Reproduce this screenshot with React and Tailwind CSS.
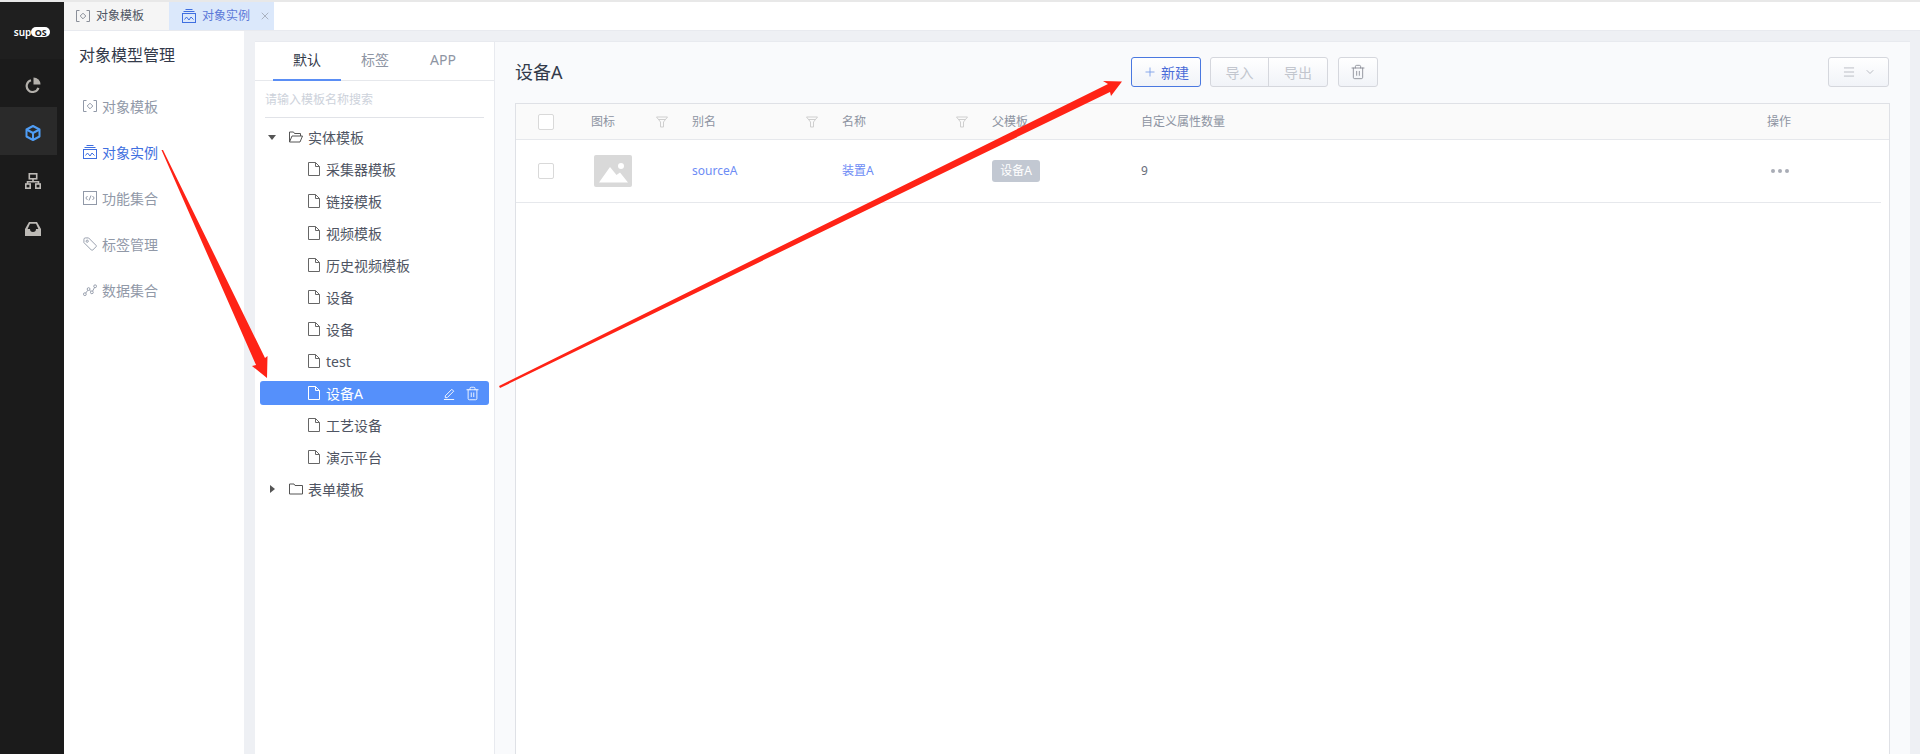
import { X, Plus, Trash2, ChevronDown, Menu } from "lucide-react";

const FONT = "font-['Noto_Sans','Noto_Sans_CJK_SC',sans-serif]";

const TemplateIcon = ({ className }) => (
  <svg viewBox="0 0 14 14" fill="none" stroke="currentColor" strokeWidth="1" className={className}>
    <path d="M3.5 1.5H.5v11h3M10.5 1.5h3v11h-3" />
    <path d="M7 4.2L9.8 7 7 9.8 4.2 7z" />
  </svg>
);

const InstanceIcon = ({ className }) => (
  <svg viewBox="0 0 14 14" fill="none" stroke="currentColor" strokeWidth="1" className={className}>
    <path d="M3.5.5h7M1.5 2.5h11" />
    <rect x=".5" y="4.5" width="13" height="9" />
    <path d="M2.5 10.5l2-2.5 2.5 3 2-3 2.5 2.5" />
  </svg>
);

const CodeIcon = ({ className }) => (
  <svg viewBox="0 0 14 14" fill="none" stroke="currentColor" strokeWidth="1" className={className}>
    <rect x=".5" y=".5" width="13" height="13" />
    <path d="M4.5 5L2.8 7l1.7 2M9.5 5l1.7 2-1.7 2M8 4.5L6 9.5" />
  </svg>
);

const TagIcon = ({ className }) => (
  <svg viewBox="0 0 15 15" fill="none" stroke="currentColor" strokeWidth="1" className={className}>
    <path d="M1 2.5A1.5 1.5 0 0 1 2.5 1H6l8 8a1 1 0 0 1 0 1.4L10.4 14a1 1 0 0 1-1.4 0L1 6z" strokeLinejoin="round" />
    <circle cx="4.5" cy="4.5" r="1.2" />
  </svg>
);

const DataIcon = ({ className }) => (
  <svg viewBox="0 0 15 15" fill="none" stroke="currentColor" strokeWidth="1" className={className}>
    <circle cx="2" cy="12" r="1.5" />
    <circle cx="6" cy="6.5" r="1.5" />
    <circle cx="9.5" cy="10" r="1.5" />
    <circle cx="13" cy="3.5" r="1.5" />
    <path d="M2.9 10.8l2.2-3M7 7.6l1.4 1.3M10.3 8.7l2-3.8" />
  </svg>
);

const FileIcon = ({ className }) => (
  <svg viewBox="0 0 12 14" fill="none" stroke="currentColor" strokeWidth="1" className={className}>
    <path d="M.5.5h7l4 4v9H.5z" />
    <path d="M7.5.5v4h4" />
  </svg>
);

const FolderOpen = ({ className }) => (
  <svg viewBox="0 0 14 12" fill="none" stroke="currentColor" strokeWidth="1" className={className}>
    <path d="M.5 11V1h4l1 1.5h6V5" />
    <path d="M.5 11l2.5-6h10.5L11 11z" />
  </svg>
);

const FolderClosed = ({ className }) => (
  <svg viewBox="0 0 14 12" fill="none" stroke="currentColor" strokeWidth="1" className={className}>
    <path d="M.5 11V1h4.5l1 1.5h7.5V11z" />
  </svg>
);

const FilterIcon = () => (
  <svg viewBox="0 0 12 12" fill="none" stroke="#cfcfcf" strokeWidth="1" className="h-3 w-3">
    <path d="M.5 1h11L7.5 6v5h-3V6z" />
    <path d="M2.5 3.5h7" />
  </svg>
);

const Logo = () => (
  <div className="flex items-center text-white">
    <span className="text-[10px] font-semibold leading-none">sup</span>
    <span className="flex h-[10px] w-[19px] items-center justify-center rounded-full bg-white text-[9px] font-bold leading-none text-[#1c1c1c]">OS</span>
  </div>
);

const Sidebar = () => (
  <div className="flex w-16 shrink-0 flex-col bg-[#1b1b1b]">
    <div className="flex h-[57px] items-center justify-center bg-[#1f1f1f] pt-[3px]">
      <Logo />
    </div>
    <div className="flex h-12 w-[57px] items-center justify-center pl-[8px] pt-[3px]">
      <svg viewBox="0 0 16 16" className="h-4 w-4" fill="none" stroke="#b3b0ab" strokeWidth="2.2">
        <path d="M6 3.2a6 6 0 1 0 7.4 7.6" />
        <path d="M8.5 .5v7h7a7 7 0 0 0-7-7z" fill="#b3b0ab" stroke="none" />
      </svg>
    </div>
    <div className="flex h-12 w-[57px] items-center justify-center bg-[#2a2a2a] pl-[8px] pt-[3px]">
      <svg viewBox="0 0 16 16" className="h-4 w-4" fill="none" stroke="#4f9df5" strokeWidth="2" strokeLinejoin="round">
        <path d="M8 1l6.5 3.5v7L8 15l-6.5-3.5v-7z" />
        <path d="M1.5 4.5L8 8l6.5-3.5M8 8v7" />
      </svg>
    </div>
    <div className="flex h-12 w-[57px] items-center justify-center pl-[8px] pt-[3px]">
      <svg viewBox="0 0 16 16" className="h-4 w-4" fill="none" stroke="#bdbab6" strokeWidth="1.6">
        <rect x="4.3" y=".8" width="7.4" height="5" />
        <path d="M8 5.8v3M2.5 11V8.8h11V11" />
        <rect x=".8" y="11" width="4.4" height="4.2" />
        <rect x="10.8" y="11" width="4.4" height="4.2" />
      </svg>
    </div>
    <div className="flex h-12 w-[57px] items-center justify-center pl-[8px] pt-[3px]">
      <svg viewBox="0 0 16 16" className="h-4 w-4" fill="#bdbab6" fillRule="evenodd">
        <path d="M4 1h8l4 7v7H0V8zM5 2.8h6L13.4 8H11a3 3 0 0 1-6 0H2.6z" />
      </svg>
    </div>
  </div>
);

const navItems = [
  { label: "对象模板", Icon: TemplateIcon },
  { label: "对象实例", Icon: InstanceIcon, active: true },
  { label: "功能集合", Icon: CodeIcon },
  { label: "标签管理", Icon: TagIcon },
  { label: "数据集合", Icon: DataIcon },
];

const LeftNav = () => (
  <div className="w-[180px] shrink-0 bg-white">
    <div className="pl-[15px] pt-[12px] text-[16px] leading-[24px] text-[#333a4a]">对象模型管理</div>
    <div className="mt-[21px] flex flex-col gap-[10px] pl-[18px]">
      {navItems.map(({ label, Icon, active }) => (
        <div
          key={label}
          className={`flex h-9 items-center gap-[5px] text-[14px] ${active ? "text-[#3f6fe0]" : "text-[#9199a8]"}`}
        >
          <span className="flex w-[15px] justify-center">
            <Icon className="h-[14px] w-[14px]" />
          </span>
          <span>{label}</span>
        </div>
      ))}
    </div>
  </div>
);

const treeLeaves = ["采集器模板", "链接模板", "视频模板", "历史视频模板", "设备", "设备", "test", "设备A", "工艺设备", "演示平台"];

const TreePanel = () => (
  <div className="flex w-[240px] shrink-0 flex-col border-r border-[#e8eaef] bg-white">
    <div className="flex h-[39px] shrink-0 border-b border-[#e6e8ec] pl-[18px] text-[14px]">
      <div className="relative flex w-[68px] items-center justify-center pb-[3px] text-[#333a4a]">
        默认
        <div className="absolute bottom-[-1px] left-0 h-[2px] w-full bg-[#5a8ef5]" />
      </div>
      <div className="flex w-[68px] items-center justify-center pb-[3px] text-[#8e95a3]">标签</div>
      <div className="flex w-[68px] items-center justify-center pb-[3px] text-[#8e95a3]">APP</div>
    </div>
    <div className="mx-[10px] flex h-[37px] shrink-0 items-center border-b border-[#e1e3e8] pt-[2px] text-[12px] text-[#cdd2db]">
      请输入模板名称搜索
    </div>
    <div className="mt-[3px] flex flex-col pl-[5px] pr-[5px] text-[14px] text-[#4f5563]">
      <div className="flex h-8 items-center pl-[8px]">
        <span className="h-0 w-0 border-x-[4px] border-t-[5px] border-x-transparent border-t-[#555]" />
        <FolderOpen className="ml-[13px] h-[12px] w-[14px] text-[#555]" />
        <span className="ml-[5px]">实体模板</span>
      </div>
      {treeLeaves.map((name, i) =>
        name === "设备A" ? (
          <div key={i} className="my-[4px] flex h-6 items-center rounded-[3px] bg-[#5590fb] pl-[48px] pr-[9px] text-white">
            <FileIcon className="h-[14px] w-[12px]" />
            <span className="ml-[6px]">{name}</span>
            <svg viewBox="0 0 14 14" fill="none" stroke="currentColor" strokeWidth="1" className="ml-auto h-[13px] w-[13px]">
              <path d="M2.5 9.5l7-7 2 2-7 7H2.5zM1 13.5h11" />
            </svg>
            <Trash2 className="ml-[9px] h-[15px] w-[15px]" strokeWidth={1.4} />
          </div>
        ) : (
          <div key={i} className="flex h-8 items-center pl-[48px]">
            <FileIcon className="h-[14px] w-[12px] text-[#666]" />
            <span className="ml-[6px]">{name}</span>
          </div>
        )
      )}
      <div className="flex h-8 items-center pl-[8px]">
        <span className="ml-[2px] h-0 w-0 border-y-[4px] border-l-[5px] border-y-transparent border-l-[#555]" />
        <FolderClosed className="ml-[14px] h-[12px] w-[14px] text-[#555]" />
        <span className="ml-[5px]">表单模板</span>
      </div>
    </div>
  </div>
);

const Toolbar = () => (
  <div className="flex h-[61px] shrink-0 items-center pb-[1px] pl-[20px] pr-[21px]">
    <div className="w-[616px] text-[18px] text-[#333a4a]">设备A</div>
    <button className="flex h-[30px] w-[70px] items-center justify-center gap-[4px] rounded-[3px] border border-[#4a78e0] bg-gradient-to-b from-white to-[#f1f3f8] text-[14px] text-[#4a6bd8]">
      <Plus className="h-[14px] w-[14px] text-[#7a9de8]" strokeWidth={1.5} />
      新建
    </button>
    <div className="ml-[9px] flex h-[30px] rounded-[3px] border border-[#d5d7dd] bg-gradient-to-b from-white to-[#f1f3f8] text-[14px] text-[#c2c6ce]">
      <div className="flex w-[58px] items-center justify-center border-r border-[#d5d7dd]">导入</div>
      <div className="flex w-[58px] items-center justify-center">导出</div>
    </div>
    <button className="ml-[10px] flex h-[30px] w-[40px] items-center justify-center rounded-[3px] border border-[#d5d7dd] bg-gradient-to-b from-white to-[#f1f3f8] text-[#7d828c]">
      <Trash2 className="h-[16px] w-[16px]" strokeWidth={1.2} />
    </button>
    <button className="ml-auto flex h-[30px] w-[61px] items-center justify-center gap-[8px] rounded-[3px] border border-[#d5d7dd] bg-gradient-to-b from-white to-[#f1f3f8] text-[#a5a8b0]">
      <Menu className="h-[14px] w-[14px]" strokeWidth={1.2} />
      <ChevronDown className="h-[12px] w-[12px]" strokeWidth={1.5} />
    </button>
  </div>
);

const Checkbox = () => <span className="block h-4 w-4 rounded-[2px] border border-[#d9d9d9] bg-white" />;

const columns = [
  { label: "图标", w: "w-[101px]", filter: true },
  { label: "别名", w: "w-[150px]", filter: true },
  { label: "名称", w: "w-[150px]", filter: true },
  { label: "父模板", w: "w-[149px]" },
  { label: "自定义属性数量", w: "w-[626px]" },
  { label: "操作", w: "" },
];

const Table = () => (
  <div className="ml-[20px] mr-[20px] flex flex-1 flex-col border-x border-t border-[#dfe1e6] bg-white text-[12px]">
    <div className="flex h-[36px] shrink-0 items-center border-b border-[#e6e8ec] bg-[#fafafa] pl-[22px] text-[#8d94a2]">
      <div className="w-[53px]"><Checkbox /></div>
      {columns.map((c) => (
        <div key={c.label} className={`relative flex items-center ${c.w}`}>
          {c.label}
          {c.filter && <span className="absolute right-[24px] flex"><FilterIcon /></span>}
        </div>
      ))}
    </div>
    <div className="mr-[8px] flex h-[63px] shrink-0 items-center border-b border-[#e6e8ec] pl-[22px] text-[#666c79]">
      <div className="w-[56px]"><Checkbox /></div>
      <div className="w-[98px]">
        <div className="h-[32px] w-[38px] overflow-hidden rounded-[2px] bg-[#d9d9d9]">
          <svg viewBox="0 0 38 32" className="h-[32px] w-[38px]" fill="#fff">
            <circle cx="27" cy="11" r="3" />
            <path d="M5 27.5L16 12l6.5 8 3.5-2.5 8 10z" />
          </svg>
        </div>
      </div>
      <div className="w-[150px] text-[#6d8cf5]">sourceA</div>
      <div className="w-[150px] text-[#6d8cf5]">装置A</div>
      <div className="w-[149px]">
        <span className="flex h-[22px] w-[48px] items-center justify-center rounded-[3px] bg-[#c2c8d2] text-[12px] text-white">设备A</span>
      </div>
      <div className="w-[630px]">9</div>
      <div className="flex gap-[3px]">
        <span className="h-[4px] w-[4px] rounded-full bg-[#a9adb6]" />
        <span className="h-[4px] w-[4px] rounded-full bg-[#a9adb6]" />
        <span className="h-[4px] w-[4px] rounded-full bg-[#a9adb6]" />
      </div>
    </div>
  </div>
);

const Arrows = () => (
  <svg viewBox="0 0 1920 754" className="pointer-events-none absolute left-0 top-0 h-[754px] w-[1920px]" fill="#ff2316">
    <path d="M161.5 150 L163 150 L265 358 L267.5 356 L267 378 L252 366 L256 365 Z" />
    <path d="M499 386 L1108 84 L1103 81 L1122 81.5 L1111 96 L1110 92 L500 388 Z" />
  </svg>
);

export default function App() {
  return (
    <div className={`relative flex h-[754px] w-[1920px] flex-col overflow-hidden bg-white ${FONT}`}>
      <div className="h-[2px] shrink-0 bg-[#e8e8e8]" />
      <div className="flex min-h-0 flex-1">
        <Sidebar />
        <div className="flex min-w-0 flex-1 flex-col">
          <div className="flex h-[29px] shrink-0 border-b border-[#e8eaef] text-[12px]">
            <div className="flex w-[105px] items-center gap-[6px] bg-[#f5f5f5] pl-[12px] text-[#4f5563]">
              <TemplateIcon className="h-[14px] w-[14px] text-[#8a8f99]" />
              对象模板
            </div>
            <div className="flex w-[105px] items-center gap-[6px] bg-[#dbe8fb] pl-[13px] text-[#5b78d8]">
              <InstanceIcon className="h-[14px] w-[14px] text-[#3f6fe0]" />
              对象实例
              <X className="ml-[3px] h-3 w-3 text-[#9aa0ac]" strokeWidth={1.5} />
            </div>
          </div>
          <div className="flex min-h-0 flex-1 bg-[#eef0f4]">
            <LeftNav />
            <div className="ml-[11px] mr-[10px] mt-[10px] flex min-w-0 flex-1 border-t border-[#e8eaef]">
              <TreePanel />
              <div className="flex min-w-0 flex-1 flex-col bg-[#f9fafc]">
                <Toolbar />
                <Table />
              </div>
            </div>
          </div>
        </div>
      </div>
      <Arrows />
    </div>
  );
}
